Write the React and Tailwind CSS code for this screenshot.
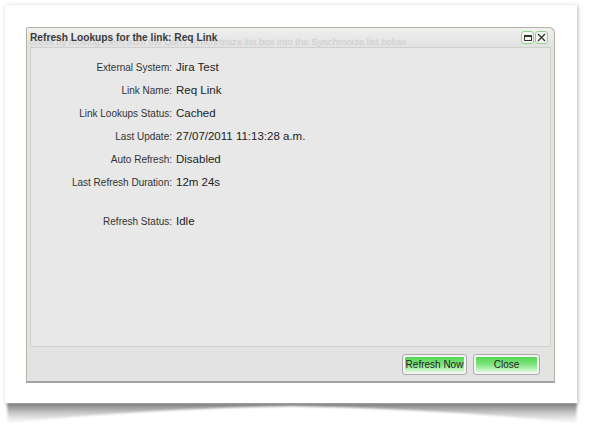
import React from "react";

const rows = [
  ["External System:", "Jira Test"],
  ["Link Name:", "Req Link"],
  ["Link Lookups Status:", "Cached"],
  ["Last Update:", "27/07/2011 11:13:28 a.m."],
  ["Auto Refresh:", "Disabled"],
  ["Last Refresh Duration:", "12m 24s"],
];

function Row({ label, value, className = "" }) {
  return (
    <div className={"flex h-[23px] items-center " + className}>
      <div className="w-[141px] text-right text-[10px] text-[#333]">{label}</div>
      <div className="ml-[4px] text-[11.5px] text-[#222]">{value}</div>
    </div>
  );
}

function GreenButton({ children, width }) {
  return (
    <button
      className={
        "h-[21px] rounded-[3px] border border-[#a9a9a9] bg-[#f4f4f4] p-[2px] " + width
      }
    >
      <span className="flex h-full w-full items-center justify-center rounded-[1px] bg-gradient-to-b from-[#4fd64f] via-[#7fe37f] to-[#d8f7d8] text-[10px] text-[#222]">
        {children}
      </span>
    </button>
  );
}

export default function App() {
  return (
    <div className="h-[432px] w-[590px] bg-white pl-[5px] pt-[5px] font-['Liberation_Sans',Arial,sans-serif]">
      <div className="relative h-[398px] w-[572px] bg-white shadow-[1px_1px_4px_rgba(0,0,0,0.28)]">
        {/* lifted-corner shadow under the card */}
        <svg
          className="absolute left-0 top-full"
          width="574"
          height="24"
          viewBox="0 0 574 24"
        >
          <defs>
            <linearGradient id="curl" x1="0" y1="0" x2="0" y2="1">
              <stop offset="0" stopColor="#6f6f6f" stopOpacity="0.95" />
              <stop offset="1" stopColor="#bdbdbd" stopOpacity="0.1" />
            </linearGradient>
            <filter id="blur" x="-5%" y="-50%" width="110%" height="200%">
              <feGaussianBlur stdDeviation="1.2" />
            </filter>
          </defs>
          <path
            d="M2 0 L572 0 L571 20 Q440 6 287 3 Q134 6 3 20 Z"
            fill="url(#curl)"
            filter="url(#blur)"
          />
        </svg>

        <div className="pl-[21px] pt-[22px]">
          {/* dialog */}
          <div className="flex h-[356px] w-[529px] flex-col rounded-tl-[2px] rounded-tr-[6px] border border-b-2 border-[#b3b3a6] border-b-[#a3a3a3] bg-[#e3e3e3]">
            <div className="relative flex h-[19px] items-center overflow-hidden rounded-tr-[6px] bg-gradient-to-b from-[#efefef] to-[#e2e2e2] pl-[3px]">
              <span className="absolute left-[2px] top-[7px] whitespace-nowrap text-[9.6px] text-[#cdcdcd]">
                ccess by moving them from the Don't Synchronize list box into the Synchronize list below
              </span>
              <span className="relative text-[10.2px] font-bold text-[#3b3b3b]">
                Refresh Lookups for the link: Req Link
              </span>
              <div className="relative ml-auto mr-[6px] flex gap-[1px]">
                <span className="flex h-[13px] w-[13px] items-center justify-center rounded-[3px] border border-[#8fd08f] bg-[#f2f7f0]">
                  <span className="h-[6px] w-[8px] border border-t-2 border-[#333]" />
                </span>
                <span className="flex h-[13px] w-[13px] items-center justify-center rounded-[3px] border border-[#8fd08f] bg-[#f2f7f0]">
                  <svg width="9" height="9" viewBox="0 0 9 9">
                    <path d="M1 1 L8 8 M8 1 L1 8" stroke="#333" strokeWidth="1.4" />
                  </svg>
                </span>
              </div>
            </div>

            <div className="mx-[3px] h-[300px] border border-[#d0d0d0] bg-[#e8e8e8] pt-[8px]">
              {rows.map(([label, value]) => (
                <Row key={label} label={label} value={value} />
              ))}
              <Row className="mt-[16px]" label="Refresh Status:" value="Idle" />
            </div>

            <div className="flex flex-1 items-center justify-end gap-[6px] pr-[14px]">
              <GreenButton width="w-[65px]">Refresh Now</GreenButton>
              <GreenButton width="w-[67px]">Close</GreenButton>
            </div>
          </div>
        </div>
      </div>
    </div>
  );
}
